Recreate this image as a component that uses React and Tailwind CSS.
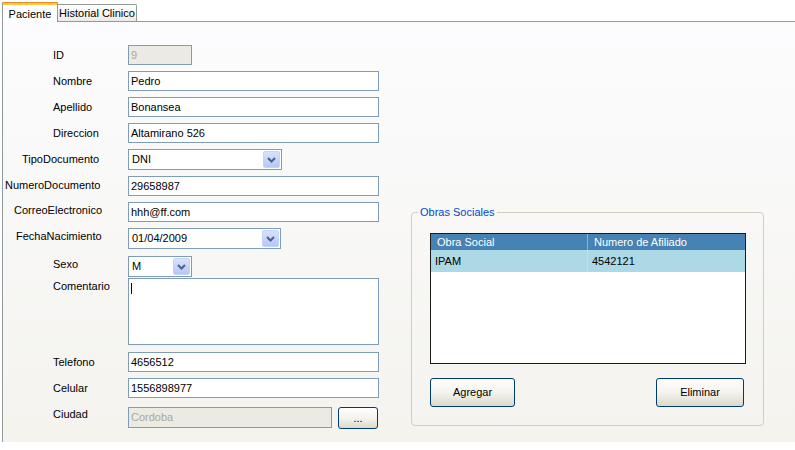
import React from "react";

const font = { fontFamily: '"Liberation Sans", Arial, sans-serif' };

function Chevron() {
  return (
    <div className="w-[17px] h-[17px] m-[1px] rounded-[2px] border border-[#c3d3fd] bg-linear-to-b from-[#d7e3fd] to-[#b4c8f7] flex items-center justify-center">
      <svg width="9" height="6" viewBox="0 0 9 6">
        <path d="M1 1 L4.5 4.5 L8 1" fill="none" stroke="#4d6185" strokeWidth="2" />
      </svg>
    </div>
  );
}

function TextBox({ value, w = "w-[251px]", disabled = false, h = "h-[20px]" }) {
  return (
    <div
      className={`${w} ${h} border border-[#7f9db9] flex items-center pl-[2px] text-[11px] ${
        disabled ? "bg-[#ebebe4] text-[#aca899]" : "bg-white text-black"
      }`}
    >
      {value}
    </div>
  );
}

function Combo({ value, w }) {
  return (
    <div className={`${w} h-[21px] border border-[#7f9db9] bg-white flex items-center justify-between text-[11px] text-black`}>
      <span className="pl-[3px]">{value}</span>
      <Chevron />
    </div>
  );
}

function Row({ label, pl, mt, h = "h-[20px]", children, top = "" }) {
  return (
    <div className={`flex ${mt}`}>
      <div className={`w-[125px] ${h} flex ${top ? `items-start ${top}` : "items-center"} ${pl} text-[11px] text-black`}>
        {label}
      </div>
      {children}
    </div>
  );
}

function XPButton({ children, w, h }) {
  return (
    <div className={`${w} ${h} rounded-[3px] border border-[#003c74] bg-linear-to-b from-white via-[#f4f3ee] to-[#dcd8cc] flex items-center justify-center text-[11px] text-black`}>
      {children}
    </div>
  );
}

export default function App() {
  return (
    <div className="w-[795px] h-[450px] bg-white overflow-hidden" style={font}>
      {/* tabs */}
      <div className="flex items-end h-[21px] pl-[2px] relative z-10">
        <div className="w-[56px] h-[20px] -mb-[1px] bg-white border-x border-[#919b9c] rounded-t-[2px] relative flex items-start justify-center pt-[3px] text-[11px] text-black">
          <div className="absolute left-[-1px] right-[-1px] top-0 h-[1px] bg-[#e68b2c] rounded-t-[2px]" />
          <div className="absolute left-0 right-0 top-[1px] h-[2px] bg-[#ffc83c]" />
          <span className="mt-[1px]">Paciente</span>
        </div>
        <div className="w-[79px] h-[17px] border-t border-r border-[#919b9c] rounded-tr-[2px] bg-linear-to-b from-white to-[#ecebe6] flex items-center justify-center text-[11px] text-black">
          Historial Clinico
        </div>
      </div>
      {/* page */}
      <div className="ml-[2px] h-[421px] border-l border-t border-[#919b9c] bg-linear-to-b from-[#fcfcfe] to-[#f4f3ee] flex">
        <div className="w-[407px] flex flex-col">
          <Row label="ID" pl="pl-[50px]" mt="mt-[23px]">
            <TextBox value="9" w="w-[64px]" disabled />
          </Row>
          <Row label="Nombre" pl="pl-[50px]" mt="mt-[6px]">
            <TextBox value="Pedro" />
          </Row>
          <Row label="Apellido" pl="pl-[50px]" mt="mt-[6px]">
            <TextBox value="Bonansea" />
          </Row>
          <Row label="Direccion" pl="pl-[50px]" mt="mt-[6px]">
            <TextBox value="Altamirano 526" />
          </Row>
          <Row label="TipoDocumento" pl="pl-[19px]" mt="mt-[6px]" h="h-[21px]">
            <Combo value="DNI" w="w-[154px]" />
          </Row>
          <Row label="NumeroDocumento" pl="pl-[2px]" mt="mt-[6px]" h="h-[19px]">
            <TextBox value="29658987" />
          </Row>
          <Row label="CorreoElectronico" pl="pl-[11px]" mt="mt-[6px]" h="h-[17px]">
            <TextBox value="hhh@ff.com" />
          </Row>
          <Row label="FechaNacimiento" pl="pl-[13px]" mt="mt-[6px]" h="h-[21px]" top="pt-0">
            <Combo value="01/04/2009" w="w-[153px]" />
          </Row>
          <Row label="Sexo" pl="pl-[50px]" mt="mt-[7px]" h="h-[21px]" top="pt-0">
            <Combo value="M" w="w-[64px]" />
          </Row>
          <Row label="Comentario" pl="pl-[50px]" mt="mt-[1px]" h="h-[67px]" top="pt-0">
            <div className="w-[251px] h-[67px] border border-[#7f9db9] bg-white relative">
              <div className="absolute left-[2px] top-[4px] w-[1px] h-[11px] bg-black" />
            </div>
          </Row>
          <Row label="Telefono" pl="pl-[50px]" mt="mt-[7px]">
            <TextBox value="4656512" />
          </Row>
          <Row label="Celular" pl="pl-[50px]" mt="mt-[6px]">
            <TextBox value="1556898977" />
          </Row>
          <Row label="Ciudad" pl="pl-[50px]" mt="mt-[9px]" h="h-[21px]" top="-mt-[1px]">
            <div className="flex items-start">
              <TextBox value="Cordoba" w="w-[204px]" h="h-[21px]" disabled />
              <div className="ml-[6px]">
                <XPButton w="w-[40px]" h="h-[22px]">...</XPButton>
              </div>
            </div>
          </Row>
        </div>
        {/* group box */}
        <div className="mt-[190px] ml-[1px] w-[353px] h-[214px] border border-[#d0d0bf] rounded-[4px] relative px-[18px]">
          <div className="absolute left-[6px] top-[-7px] px-[2px] text-[11px] text-[#0046d5] leading-[13px] bg-[#f8f8f7]">
            Obras Sociales
          </div>
          <div className="mt-[20px] w-[316px] h-[131px] border border-[#1c1c1c] bg-white">
            <div className="flex h-[16px] bg-[#4682b4] text-white text-[11px]">
              <div className="w-[157px] border-r border-[#8fb2d2] pl-[6px] flex items-center">Obra Social</div>
              <div className="pl-[6px] flex items-center">Numero de Afiliado</div>
            </div>
            <div className="flex h-[22px] bg-[#add8e6] text-black text-[11px]">
              <div className="w-[157px] border-r border-[#c3dfe8] pl-[4px] flex items-center">IPAM</div>
              <div className="pl-[4px] flex items-center">4542121</div>
            </div>
          </div>
          <div className="flex justify-between mt-[14px] w-[314px]">
            <XPButton w="w-[85px]" h="h-[29px]">Agregar</XPButton>
            <XPButton w="w-[88px]" h="h-[29px]">Eliminar</XPButton>
          </div>
        </div>
      </div>
    </div>
  );
}
